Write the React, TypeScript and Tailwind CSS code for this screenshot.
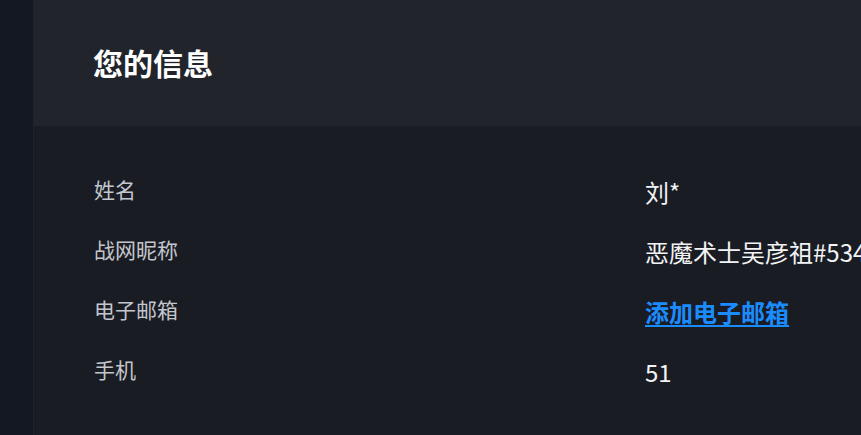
import { FC } from "react"

const rows: { label: string; value: string; link?: boolean }[] = [
	{ label: "姓名", value: "刘*" },
	{ label: "战网昵称", value: "恶魔术士吴彦祖#5341" },
	{ label: "电子邮箱", value: "添加电子邮箱", link: true },
	{ label: "手机", value: "51" },
]

const App: FC = () => {
	return (
		<div
			className="flex h-[435px] w-[861px] overflow-hidden bg-[#141823]"
			style={{ fontFamily: '"Noto Sans CJK SC", "Noto Sans", sans-serif' }}
		>
			<div className="w-[33px] shrink-0 bg-[#141823]" />
			<main className="flex min-w-0 flex-1 flex-col border-l border-[#1f222b] bg-[#1a1c23]">
				<header className="flex h-[126px] shrink-0 items-center bg-[#22242b] pb-[2px] pl-[59px]">
					<h1 className="text-[30px] font-bold leading-none text-white">您的信息</h1>
				</header>
				<section className="pl-[60px] pt-[33px]">
					{rows.map(row => (
						<div key={row.label} className="grid h-[60px] grid-cols-[551px_1fr] items-center">
							<span className="text-[21px] leading-none text-[#c3c6cd]">{row.label}</span>
							{row.link ? (
								<a href="#" className="mt-[5px] whitespace-nowrap text-[24px] font-bold leading-none text-[#1b8cff] underline underline-offset-[3px]">
									{row.value}
								</a>
							) : (
								<span className="mt-[5px] whitespace-nowrap text-[24px] leading-none text-[#f2f3f5]">{row.value}</span>
							)}
						</div>
					))}
				</section>
			</main>
		</div>
	)
}

export default App
